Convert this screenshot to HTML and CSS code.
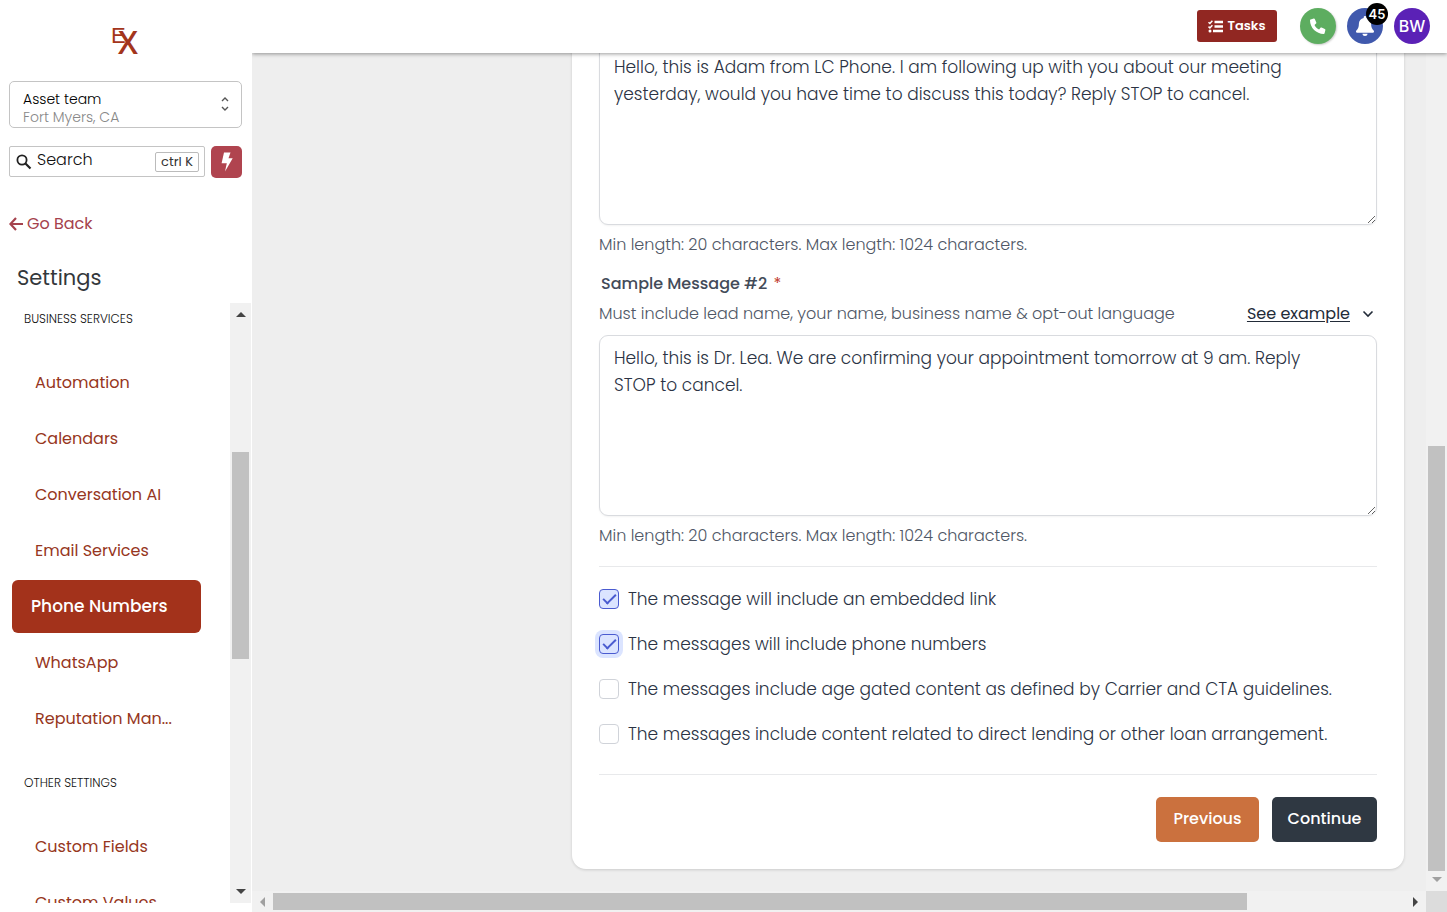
FILE: index.html
```html
<!DOCTYPE html>
<html lang="en">
<head>
<meta charset="UTF-8" />
<meta name="viewport" content="width=device-width, initial-scale=1" />
<title>Settings - Phone Numbers</title>
<link rel="stylesheet" href="styles.css">
</head>
<body>
  <aside class="sidebar">
    <svg class="logo" width="28" height="38" viewBox="0 0 28 38" role="img" aria-label="EX">
      <text class="logo-e" x="-1" y="23">E</text>
      <text class="logo-x" x="6" y="34">X</text>
    </svg>

    <button type="button" class="account" aria-haspopup="listbox">
      <span class="account-text">
        <span class="account-name">Asset team</span>
        <span class="account-place">Fort Myers, CA</span>
      </span>
      <svg width="8" height="14" viewBox="0 0 8 14" fill="none" stroke="#555" stroke-width="1.4"><path d="M1 4l3-3 3 3M1 10l3 3 3-3"/></svg>
    </button>

    <div class="search-row">
      <div class="search">
        <svg width="16" height="16" viewBox="0 0 16 16" fill="none" stroke="#222" stroke-width="1.8"><circle cx="6" cy="6" r="4.6"/><path d="M9.5 9.5l5 5" stroke-width="2.2"/></svg>
        <input type="text" id="search" aria-label="Search" placeholder="Search">
        <kbd>ctrl K</kbd>
      </div>
      <button type="button" class="quick" aria-label="Quick actions">
        <svg width="12" height="20" viewBox="0 0 12 20" fill="#fff"><path d="M3 0.5h6.5L7.5 6.2h4.2L4 19.5l1.8-8.3H0.6z"/></svg>
      </button>
    </div>

    <a href="#" class="back">
      <svg width="14" height="14" viewBox="0 0 14 14" fill="none" stroke="currentColor" stroke-width="2.2"><path d="M7 1L1.4 7 7 13M1.4 7H14"/></svg>
      Go Back
    </a>

    <h1>Settings</h1>

    <div class="menu-wrap">
      <nav class="menu">
        <h2>BUSINESS SERVICES</h2>
        <ul>
          <li><a href="#">Automation</a></li>
          <li><a href="#">Calendars</a></li>
          <li><a href="#">Conversation AI</a></li>
          <li><a href="#">Email Services</a></li>
          <li><a href="#" class="active">Phone Numbers</a></li>
          <li><a href="#">WhatsApp</a></li>
          <li><a href="#">Reputation Man...</a></li>
        </ul>
        <h2>OTHER SETTINGS</h2>
        <ul>
          <li><a href="#">Custom Fields</a></li>
          <li><a href="#">Custom Values</a></li>
        </ul>
      </nav>
      <div class="vbar menu-bar">
        <svg width="10" height="5" viewBox="0 0 10 5" fill="#444"><path d="M0 5L5 0l5 5z"/></svg>
        <div class="track"><div class="thumb"></div></div>
        <svg width="10" height="5" viewBox="0 0 10 5" fill="#444"><path d="M0 0l5 5 5-5z"/></svg>
      </div>
    </div>
  </aside>

  <div class="page">
    <header class="topbar">
      <button type="button" class="tasks">
        <svg width="15" height="13" viewBox="0 0 15 13" fill="none" stroke="#fff"><path d="M0.5 2.2l1.4 1.3L4.4 0.8M0.5 6.6l1.4 1.3 2.5-2.7" stroke-width="1.5"/><path d="M6.5 2H15M6.5 6.5H15M5 11H15" stroke-width="2.4"/><circle cx="2" cy="11" r="1.5" fill="#fff" stroke="none"/></svg>
        Tasks
      </button>
      <button type="button" class="round phone" aria-label="Call">
        <svg width="16" height="16" viewBox="0 0 16 16" fill="#fff"><path d="M0.6 1.4L3.8 0.6c0.5-0.1 0.9 0.1 1.1 0.6l1.4 3.2c0.2 0.4 0.1 0.8-0.2 1.1L4.5 6.9c1 2 2.6 3.6 4.6 4.6l1.4-1.7c0.3-0.3 0.7-0.4 1.1-0.2l3.2 1.4c0.5 0.2 0.7 0.6 0.6 1.1l-0.8 3.2c-0.1 0.4-0.5 0.7-0.9 0.7C6.3 16 0 9.8 0 2.3c0-0.4 0.2-0.8 0.6-0.9z"/></svg>
      </button>
      <button type="button" class="round bell" aria-label="Notifications">
        <svg width="18" height="20" viewBox="0 0 18 20" fill="#fff"><path d="M9 0c0.8 0 1.3 0.6 1.3 1.3v0.6c2.9 0.6 4.8 2.9 4.8 5.9 0 3.6 0.9 5.1 2.5 6.7 0.9 0.9 0.3 2.2-0.9 2.2H1.3c-1.2 0-1.8-1.3-0.9-2.2 1.6-1.6 2.5-3.1 2.5-6.7 0-3 1.9-5.3 4.8-5.9V1.3C7.7 0.6 8.2 0 9 0zM6.5 17.7h5c0 1.3-1.1 2.3-2.5 2.3s-2.5-1-2.5-2.3z"/></svg>
        <span class="badge">45</span>
      </button>
      <button type="button" class="round avatar">BW</button>
    </header>

    <main class="content">
      <form class="card">
        <textarea class="message" id="sample-1" aria-label="Sample Message #1">Hello, this is Adam from LC Phone. I am following up with you about our meeting yesterday, would you have time to discuss this today? Reply STOP to cancel.</textarea>
        <p class="help">Min length: 20 characters. Max length: 1024 characters.</p>

        <label class="title" for="sample-2">Sample Message #2 <span class="required">*</span></label>
        <div class="hint">
          <span>Must include lead name, your name, business name &amp; opt-out language</span>
          <a href="#">See example</a>
          <svg width="12" height="8" viewBox="0 0 12 8" fill="none" stroke="#222b38" stroke-width="1.6"><path d="M1.5 1.5L6 6l4.5-4.5"/></svg>
        </div>
        <textarea class="message" id="sample-2">Hello, this is Dr. Lea. We are confirming your appointment tomorrow at 9 am. Reply STOP to cancel.</textarea>
        <p class="help">Min length: 20 characters. Max length: 1024 characters.</p>

        <div class="checks">
          <label><input type="checkbox" checked> The message will include an embedded link</label>
          <label><input type="checkbox" class="focused" checked> The messages will include phone numbers</label>
          <label><input type="checkbox"> The messages include age gated content as defined by Carrier and CTA guidelines.</label>
          <label><input type="checkbox"> The messages include content related to direct lending or other loan arrangement.</label>
        </div>

        <div class="actions">
          <button type="button" class="previous">Previous</button>
          <button type="submit" class="continue">Continue</button>
        </div>
      </form>
    </main>

    <div class="vbar page-bar">
      <div class="track"><div class="thumb"></div></div>
      <svg width="10" height="5" viewBox="0 0 10 5" fill="#a0a0a0"><path d="M0 0l5 5 5-5z"/></svg>
    </div>
    <div class="hbar">
      <svg width="5" height="10" viewBox="0 0 5 10" fill="#a0a0a0"><path d="M5 0L0 5l5 5z"/></svg>
      <div class="track"><div class="thumb"></div></div>
      <svg width="5" height="10" viewBox="0 0 5 10" fill="#444"><path d="M0 0l5 5-5 5z"/></svg>
    </div>
    <div class="corner"></div>
  </div>
</body>
</html>
```
FILE: styles.css
```css
/* Reset and base styles */
* {
  box-sizing: border-box;
}
body {
  font-family: Poppins, Inter, sans-serif;
  font-size: 16px;
  margin: 0;
  height: 100vh;
  display: flex;
  overflow: hidden;
  background: #fff;
  color: #3b4354;
}
h1, h2, p, ul {
  margin: 0;
  padding: 0;
}
ul {
  list-style: none;
}
button, input, textarea, kbd {
  font-family: inherit;
}
button {
  border: none;
  padding: 0;
  cursor: pointer;
}
svg {
  flex: none;
}

/* Sidebar */
.sidebar {
  width: 252px;
  flex: none;
  display: flex;
  flex-direction: column;
  padding: 20px 0 9px;
}
.logo {
  margin: 0 0 23px 112px;
  overflow: visible;
  fill: #a3351c;
}
.logo-e {
  font-family: "Liberation Sans", sans-serif;
  font-size: 22px;
}
.logo-x {
  font-family: "Open Sans", sans-serif;
  font-size: 32px;
  font-weight: 600;
}
.account {
  display: flex;
  align-items: center;
  justify-content: space-between;
  height: 47px;
  margin: 0 10px 18px 9px;
  padding: 7px 12px 0 13px;
  border: 1px solid #c4c4c4;
  border-radius: 5px;
  background: #fff;
  text-align: left;
  font-size: 14px;
  font-weight: 300;
  line-height: 18px;
}
.account svg {
  margin-bottom: 9px;
}
.account-name, .account-place {
  display: block;
}
.account-name {
  color: #000;
}
.account-place {
  color: #888;
}
.search-row {
  display: flex;
  gap: 6px;
  margin: 0 10px 34px 9px;
}
.search {
  flex: 1;
  display: flex;
  align-items: center;
  gap: 5px;
  min-width: 0;
  height: 31px;
  padding: 0 5px 0 6px;
  border: 1px solid #c4c4c4;
  border-radius: 2px;
}
.search input {
  flex: 1;
  min-width: 0;
  padding: 0 0 4px;
  border: none;
  outline: none;
  font-size: 16px;
  font-weight: 300;
}
.search input::placeholder {
  color: #111;
}
.search kbd {
  padding: 0 5px;
  border: 1px solid #bbb;
  border-radius: 2px;
  font-size: 13px;
  line-height: 18px;
  color: #333;
}
.quick {
  display: flex;
  align-items: center;
  justify-content: center;
  width: 31px;
  height: 32px;
  border-radius: 5px;
  background: #b0444f;
}
.back {
  display: flex;
  align-items: center;
  gap: 4px;
  margin: 0 9px 27px;
  font-size: 16px;
  line-height: 24px;
  color: #a5424d;
  text-decoration: none;
}
h1 {
  margin: 0 17px 10px;
  font-size: 21px;
  font-weight: 400;
  line-height: 30px;
  color: #33373b;
}
.menu-wrap {
  flex: 1;
  display: flex;
  min-height: 0;
}
.menu {
  flex: 1;
  overflow: hidden;
}
.menu h2 {
  margin: 0 24px 19px;
  font-size: 12px;
  font-weight: 300;
  line-height: 32px;
  color: #111;
}
.menu ul {
  margin-bottom: 21px;
}
.menu li {
  display: flex;
  align-items: center;
  height: 56px;
  padding: 0 29px 0 12px;
}
.menu a {
  flex: 1;
  padding-left: 23px;
  font-size: 16px;
  line-height: 53px;
  color: #963621;
  text-decoration: none;
}
.menu a.active {
  padding-left: 19px;
  border-radius: 6px;
  background: #a3321b;
  color: #fff;
  font-size: 17px;
  font-weight: 500;
}

/* Scrollbars */
.vbar {
  display: flex;
  flex-direction: column;
  align-items: center;
  gap: 6px;
  width: 21px;
  padding: 9px 0;
  background: #f1f1f1;
}
.menu-bar {
  margin-right: 1px;
}
.track {
  flex: 1;
}
.vbar .track {
  width: 17px;
}
.thumb {
  background: #c1c1c1;
}
.menu-bar .track {
  padding-top: 129px;
}
.menu-bar .thumb {
  height: 37%;
  min-height: 207px;
}
.page-bar {
  padding-top: 0;
}
.page-bar .track {
  display: flex;
  flex-direction: column;
  justify-content: flex-end;
}
.page-bar .thumb {
  height: 52%;
}
.hbar {
  display: flex;
  align-items: center;
  gap: 8px;
  height: 21px;
  padding: 0 8px;
  background: #f1f1f1;
}
.hbar .thumb {
  width: 86%;
  height: 17px;
}
.corner {
  background: #dcdcdc;
}

/* Page */
.page {
  flex: 1;
  min-width: 0;
  display: grid;
  grid-template-columns: 1fr 21px;
  grid-template-rows: 53px 1fr 21px;
  background: #eee;
  clip-path: inset(0);
}
.topbar {
  grid-column: 1 / 3;
  z-index: 1;
  display: flex;
  align-items: center;
  justify-content: flex-end;
  gap: 11px;
  padding: 0 17px 1px 0;
  background: #fff;
  box-shadow: 0 1px 4px rgba(0,0,0,0.4);
}
.tasks {
  display: flex;
  align-items: center;
  justify-content: center;
  gap: 4px;
  width: 80px;
  height: 32px;
  margin-right: 12px;
  border-radius: 3px;
  background: #912722;
  color: #fff;
  font-size: 13px;
  font-weight: 600;
}
.round {
  position: relative;
  display: flex;
  align-items: center;
  justify-content: center;
  width: 36px;
  height: 36px;
  border-radius: 50%;
  color: #fff;
}
.phone {
  background: #5dad60;
  box-shadow: 1px 1px 2px rgba(0,0,0,0.2);
}
.bell {
  background: #4059ad;
}
.avatar {
  background: #5b21b6;
  font-family: Inter, sans-serif;
  font-size: 16px;
  font-weight: 500;
}
.badge {
  position: absolute;
  top: -5px;
  right: -5px;
  width: 22px;
  border-radius: 50%;
  background: #000;
  font-family: Inter, sans-serif;
  font-size: 13px;
  font-weight: 600;
  line-height: 22px;
}
.content {
  display: flex;
  flex-direction: column;
  justify-content: flex-end;
  min-height: 0;
  overflow: hidden;
  padding: 0 22px 22px 320px;
}

/* Form card */
.card {
  display: flex;
  flex-direction: column;
  flex: none;
  padding: 27px;
  border-radius: 14px;
  background: #fff;
  box-shadow: 0 1px 3px rgba(0,0,0,0.15);
}
.message {
  height: 181px;
  padding: 9px 32px 9px 14px;
  border: 1px solid #d9dbdf;
  border-radius: 9px;
  outline: none;
  resize: vertical;
  overflow: hidden;
  font-size: 17px;
  font-weight: 300;
  line-height: 27px;
  color: #2b3344;
  box-shadow: 0 1px 2px rgba(0,0,0,0.05);
}
.help {
  margin: 8px 0 15px;
  font-size: 16px;
  font-weight: 300;
  line-height: 24px;
  color: #4f5766;
}
.title {
  margin: 0 2px 6px;
  font-weight: 500;
  line-height: 24px;
  color: #434b59;
}
.required {
  margin-left: 2px;
  color: #c0392b;
  font-weight: 400;
}
.hint {
  display: flex;
  align-items: center;
  margin-bottom: 9px;
  padding-right: 3px;
  font-weight: 300;
  line-height: 24px;
  color: #4f5766;
}
.hint a {
  margin: 0 12px 0 auto;
  color: #222b38;
  font-weight: 400;
  text-underline-offset: 2px;
}
.checks {
  margin-top: 3px;
  padding: 9px 0 18px;
  border: solid #e8e9eb;
  border-width: 1px 0;
}
.checks label {
  display: flex;
  align-items: center;
  gap: 9px;
  height: 45px;
  font-size: 17px;
  font-weight: 300;
  color: #2b3344;
}
.checks input {
  appearance: none;
  flex: none;
  width: 20px;
  height: 20px;
  margin: 0;
  border: 1px solid #d0d3d9;
  border-radius: 4px;
  background: #fff;
}
.checks input:checked {
  display: grid;
  place-items: center;
  border-color: #4a5bd0;
  background: #dbe4ff;
}
.checks input:checked::before {
  content: "";
  box-sizing: border-box;
  width: 13px;
  height: 7px;
  margin-bottom: 3px;
  border: solid #4a5bd0;
  border-width: 0 0 2px 2px;
  transform: rotate(-45deg);
}
.checks .focused {
  box-shadow: 0 0 0 4px #dbe4ff;
}
.actions {
  display: flex;
  justify-content: flex-end;
  gap: 13px;
  margin-top: 22px;
}
.actions button {
  height: 45px;
  padding-bottom: 2px;
  border-radius: 5px;
  color: #fff;
  font-size: 16px;
  font-weight: 500;
}
.actions .previous {
  width: 103px;
  background: #cb713e;
}
.actions .continue {
  width: 105px;
  background: #2f3842;
}
```
